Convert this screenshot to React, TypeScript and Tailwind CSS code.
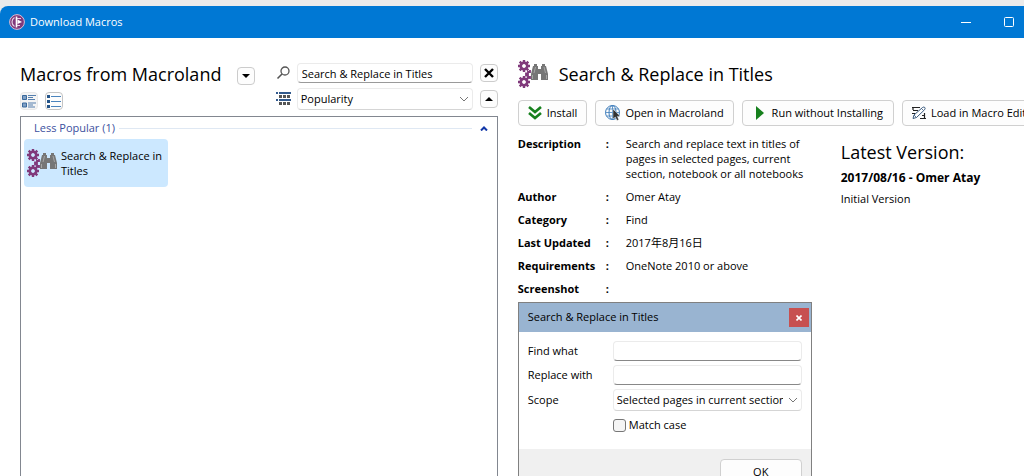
import React, { useState } from "react";

const buttonClass =
  "flex h-[26px] shrink-0 items-center justify-center whitespace-nowrap rounded border border-[#d0d0d0] bg-[#fdfdfd] text-[11px]";
const squareButtonClass =
  "flex size-[18px] shrink-0 items-center justify-center rounded border border-[#cccccc] bg-[#fdfdfd]";

const details = [
  {
    label: "Description",
    value:
      "Search and replace text in titles of pages in selected pages, current section, notebook or all notebooks",
  },
  { label: "Author", value: "Omer Atay" },
  { label: "Category", value: "Find" },
  { label: "Last Updated", value: "2017年8月16日" },
  { label: "Requirements", value: "OneNote 2010 or above" },
  { label: "Screenshot", value: "" },
];

function Gear({ cx, cy }: { cx: number; cy: number }) {
  return (
    <g transform={`translate(${cx} ${cy})`} stroke="#80397b">
      <circle r="3.2" fill="none" strokeWidth="2.6" />
      <path
        d="M0-6v2.4M0 3.600v2.4M-6 0h2.4M3.600 0h2.4M-4.300-4.300l1.700 1.700M2.600 2.600l1.700 1.700M-4.300 4.300l1.700-1.700M2.600-2.600l1.700-1.700"
        strokeWidth="2.4"
      />
    </g>
  );
}

function MacroIcon() {
  return (
    <svg width="30" height="28" viewBox="0 0 30 28" className="shrink-0" aria-hidden="true">
      <Gear cx={6} cy={6} />
      <Gear cx={6} cy={22} />
      <path d="M12 10v2h-2v1.500H8v2h2V17h2v2" fill="none" stroke="#80397b" strokeWidth="1.800" />
      <path
        d="M16 4h3v2h1v3h3V6h1V4h3v2h1l2 8v6h-7v-6h-3v6h-7v-6l2-8h1z"
        fill="#767676"
      />
      <path d="M17.500 7L16 13M26 7l1.500 6M14.500 15v4M28.500 15v4" fill="none" stroke="#a6a6a6" strokeWidth="1" />
    </svg>
  );
}

function LogoIcon() {
  return (
    <svg width="16" height="16" viewBox="0 0 16 16" aria-hidden="true">
      <circle cx="8" cy="8" r="7.400" fill="#80397b" stroke="#d9bdd6" strokeWidth="1" />
      <path d="M7.500 2.500v11" stroke="#fff" strokeWidth="1.600" />
      <path d="M5.500 3.500Q3 5 3 8t2.500 4.500M8 4.500h4M8 11.500h3" fill="none" stroke="#e4cfe2" strokeWidth="1.200" />
      <path d="M8.500 5.500L13 8l-4.500 2z" fill="#fff" />
    </svg>
  );
}

function Chevron() {
  return (
    <svg
      width="10"
      height="6"
      viewBox="0 0 10 6"
      className="pointer-events-none absolute right-1 top-1/2 -translate-y-1/2"
      aria-hidden="true"
    >
      <path d="M1 1l4 4 4-4" fill="none" stroke="#777" />
    </svg>
  );
}

function TitleBar() {
  return (
    <header className="flex h-8 shrink-0 items-center rounded-tl-lg bg-[#0078d4] pl-[9px] text-white">
      <LogoIcon />
      <h1 className="ml-[5px] flex-1 text-[11px]">Download Macros</h1>
      <button aria-label="Minimize" className="flex h-8 w-11 items-center justify-center">
        <svg width="10" height="10" viewBox="0 0 10 10">
          <path d="M0 5.500h10" stroke="#fff" />
        </svg>
      </button>
      <button aria-label="Maximize" className="flex h-8 w-9 items-center justify-center pl-[6px]">
        <svg width="10" height="10" viewBox="0 0 10 10">
          <rect x=".5" y=".5" width="9" height="9" rx="1" fill="none" stroke="#fff" />
        </svg>
      </button>
    </header>
  );
}

function MacroList() {
  const [query, setQuery] = useState("Search & Replace in Titles");

  return (
    <section className="flex w-[49%] shrink-0 flex-col pl-5 pr-1 pt-[25px]">
      <div className="flex justify-between">
        <div>
          <div className="flex items-center">
            <h2 className="whitespace-nowrap text-lg leading-5">Macros from Macroland</h2>
            <button aria-label="Choose source" className={`${squareButtonClass} ml-4 mt-1`}>
              <svg width="8" height="4" viewBox="0 0 8 4">
                <path d="M0 0h8L4 4z" />
              </svg>
            </button>
          </div>
          <div className="mt-[7px] flex gap-[7px]">
            <button aria-label="Tiles" className="flex size-[18px] items-center justify-center rounded border border-[#e8e8e8] bg-[#f4f4f4]">
              <svg width="14" height="14" viewBox="0 0 14 14">
                <path d="M.5 1.500h4v4h-4zM.5 9h4v4h-4z" fill="#7f9fc4" stroke="#39699c" />
                <path d="M6 1.500h8M6 3.500h5M6 5.500h7M6 9h8M6 11h5M6 13h7" stroke="#557fae" />
              </svg>
            </button>
            <button aria-label="List" className="flex size-[18px] items-center justify-center rounded border border-[#c4c4c4] bg-[#fdfdfd]">
              <svg width="14" height="14" viewBox="0 0 14 14">
                <path d="M0 1h3v3H0zM0 6h3v3H0zM0 11h3v3H0z" fill="#245488" />
                <path d="M4 2.500h10M4 7.500h10M4 12.500h10" stroke="#4a84bd" />
              </svg>
            </button>
          </div>
        </div>

        <div className="flex w-[222px] flex-col gap-[5px]">
          <div className="flex items-center">
            <svg width="15" height="14" viewBox="0 0 15 14" className="mr-[6px]" aria-hidden="true">
              <circle cx="9" cy="5" r="4" fill="none" stroke="#555" strokeWidth="1.300" />
              <path d="M6 8L1.500 12.500" stroke="#555" strokeWidth="1.600" />
            </svg>
            <input
              aria-label="Search macros"
              value={query}
              onChange={(e) => setQuery(e.target.value)}
              className="h-5 min-w-0 flex-1 rounded-sm border border-[#ebebeb] border-b-[#9a9a9a] bg-white px-1 text-[11px] outline-none"
            />
            <button aria-label="Clear search" onClick={() => setQuery("")} className={`${squareButtonClass} ml-[7px]`}>
              <svg width="10" height="10" viewBox="0 0 10 10">
                <path d="M1 1l8 8M9 1L1 9" stroke="#000" strokeWidth="2.400" />
              </svg>
            </button>
          </div>
          <div className="flex items-center">
            <svg width="15" height="14" viewBox="0 0 15 14" className="mr-[6px]" aria-hidden="true">
              <path d="M0 1h2M3 1h12M0 8h2M3 8h12" stroke="#31598c" strokeWidth="2" />
              <path d="M3 4.500h12M3 11.500h12" stroke="#555" strokeWidth="3" strokeDasharray="3 1" />
            </svg>
            <div className="relative min-w-0 flex-1">
              <select
                aria-label="Sort by"
                className="block h-[22px] w-full appearance-none rounded-sm border border-[#ebebeb] border-b-[#d5d5d5] bg-white pl-[3px] text-[11px] outline-none"
              >
                <option>Popularity</option>
              </select>
              <Chevron />
            </div>
            <button aria-label="Sort ascending" className={`${squareButtonClass} ml-[7px]`}>
              <svg width="8" height="4" viewBox="0 0 8 4">
                <path d="M0 4h8L4 0z" />
              </svg>
            </button>
          </div>
        </div>
      </div>

      <div className="mt-[6px] flex-1 border border-b-0 border-[#828790] px-[3px] pt-[3px]">
        <div className="flex h-4 items-center pl-[10px] pr-[6px] text-[11px] text-[#3c509e]">
          <h3 className="whitespace-nowrap">Less Popular (1)</h3>
          <div className="ml-1 h-px flex-1 bg-[#dfe8f3]" />
          <button aria-label="Collapse group" className="ml-2">
            <svg width="8" height="5" viewBox="0 0 8 5">
              <path d="M1 4.500l3-3 3 3" fill="none" stroke="#1237a8" strokeWidth="2" />
            </svg>
          </button>
        </div>
        <button className="mt-[3px] flex h-12 w-36 items-center rounded-sm bg-[#cce8ff] pl-[3px] text-left text-[11px] leading-[15px]">
          <MacroIcon />
          <span className="ml-1 whitespace-nowrap">
            Search &amp; Replace in
            <br />
            Titles
          </span>
        </button>
      </div>
    </section>
  );
}

function ReplaceDialog() {
  const [matchCase, setMatchCase] = useState(false);
  const inputClass =
    "block h-5 w-full rounded-sm border border-[#ebebeb] border-b-[#888] bg-white px-1 outline-none";

  return (
    <div className="border border-[#808080] text-[11px]">
      <div className="flex h-[29px] items-center justify-between bg-[#99b4d1] pl-[9px] pr-[2px]">
        <h3>Search &amp; Replace in Titles</h3>
        <button aria-label="Close" className="flex h-[19px] w-5 items-center justify-center bg-[#c75050]">
          <svg width="6" height="6" viewBox="0 0 6 6">
            <path d="M.5.5l5 5M5.500.5l-5 5" stroke="#fff" strokeWidth="1.600" />
          </svg>
        </button>
      </div>
      <div className="grid grid-cols-[85px_1fr] items-center gap-y-1 bg-white px-[9px] pb-[14px] pt-[9px]">
        <label htmlFor="find">Find what</label>
        <input id="find" className={inputClass} />
        <label htmlFor="replace">Replace with</label>
        <input id="replace" className={inputClass} />
        <label htmlFor="scope">Scope</label>
        <div className="relative">
          <select
            id="scope"
            className="block h-[22px] w-full appearance-none rounded-sm border border-[#ebebeb] border-b-[#d5d5d5] bg-white pl-[3px] pr-[18px] outline-none"
          >
            <option>Selected pages in current section</option>
          </select>
          <Chevron />
        </div>
        <label className="col-start-2 flex h-5 items-center gap-[3px]">
          <input
            type="checkbox"
            checked={matchCase}
            onChange={(e) => setMatchCase(e.target.checked)}
            className="size-[13px] appearance-none rounded-[3px] border border-[#777] bg-[#f5f5f5] checked:bg-[#0078d4]"
          />
          Match case
        </label>
      </div>
      <div className="flex justify-end bg-[#f0f0f0] px-[9px] py-[10px]">
        <button className="h-[26px] w-[82px] rounded border border-[#d0d0d0] bg-[#fdfdfd]">OK</button>
      </div>
    </div>
  );
}

function MacroDetails() {
  return (
    <section className="min-w-0 flex-1 overflow-hidden pl-4 pt-[22px]">
      <div className="flex items-center gap-[11px]">
        <MacroIcon />
        <h2 className="whitespace-nowrap text-lg leading-7">Search &amp; Replace in Titles</h2>
      </div>

      <div className="mt-3 flex gap-2">
        <button className={`${buttonClass} gap-[5px] px-[9px]`}>
          <svg width="14" height="14" viewBox="0 0 14 14">
            <path d="M1 1l6 5 6-5M1 7l6 5 6-5" fill="none" stroke="#16801d" strokeWidth="2.600" />
          </svg>
          Install
        </button>
        <button className={`${buttonClass} gap-1 px-[9px]`}>
          <svg width="16" height="16" viewBox="0 0 16 16">
            <g fill="none" stroke="#3f7dbb">
              <circle cx="7.500" cy="7.500" r="7" />
              <ellipse cx="7.500" cy="7.500" rx="3.500" ry="7" />
              <path d="M.5 7.500h14M1.500 4h12M1.500 11h12M7.500.5v14" strokeWidth=".8" />
            </g>
            <path d="M8 4v10l2.300-2 1.700 3.500 1.800-.8-1.600-3.400h3z" fill="#333" stroke="#fff" strokeWidth=".4" />
          </svg>
          Open in Macroland
        </button>
        <button className={`${buttonClass} gap-2 pl-[13px] pr-[10px]`}>
          <svg width="8" height="14" viewBox="0 0 8 14">
            <path d="M0 0l8 7-8 7z" fill="#16801d" />
          </svg>
          Run without Installing
        </button>
        <button className={`${buttonClass} gap-[5px] px-[9px]`}>
          <svg width="14" height="14" viewBox="0 0 14 14">
            <path d="M0 1.500h8M1 1v3M1 4.500h5M0 7.500h3M8 12.500h6M12.500 7v6M10 9.500h3" stroke="#222" strokeWidth="1.200" />
            <path d="M1 12.500l1-3.500 8.500-7.500q1.500-1 2.300 0t-.3 2.300L4.500 11.500z" fill="#fff" stroke="#39597d" />
            <path d="M9.500 2.500l2 2M2 9l2.500 2.500" stroke="#39597d" strokeWidth=".8" />
          </svg>
          Load in Macro Editor
        </button>
      </div>

      <div className="mt-[6px] flex">
        <div className="w-[294px] shrink-0">
          <table className="w-full text-[11px] leading-[15px]">
            <tbody>
              {details.map((row) => (
                <tr key={row.label} className="align-top">
                  <th scope="row" className="w-[88px] whitespace-nowrap py-1 text-left font-bold">
                    {row.label}
                  </th>
                  <td className="w-5 py-1 font-bold">:</td>
                  <td className="py-1">{row.value}</td>
                </tr>
              ))}
            </tbody>
          </table>
          <div className="mt-[2px]">
            <ReplaceDialog />
          </div>
        </div>

        <div className="ml-[29px] whitespace-nowrap pt-2">
          <h3 className="text-lg leading-6">Latest Version:</h3>
          <h4 className="mt-1 text-xs font-bold leading-5">2017/08/16 - Omer Atay</h4>
          <p className="mt-px text-[11px] leading-5">Initial Version</p>
        </div>
      </div>
    </section>
  );
}

export default function App() {
  return (
    <div className="flex h-screen flex-col overflow-hidden bg-[#ebebeb] pt-[6px] font-['Open_Sans','Noto_Sans_CJK_SC',sans-serif] text-black">
      <TitleBar />
      <main className="flex min-h-0 flex-1 overflow-hidden bg-white">
        <MacroList />
        <MacroDetails />
      </main>
    </div>
  );
}
